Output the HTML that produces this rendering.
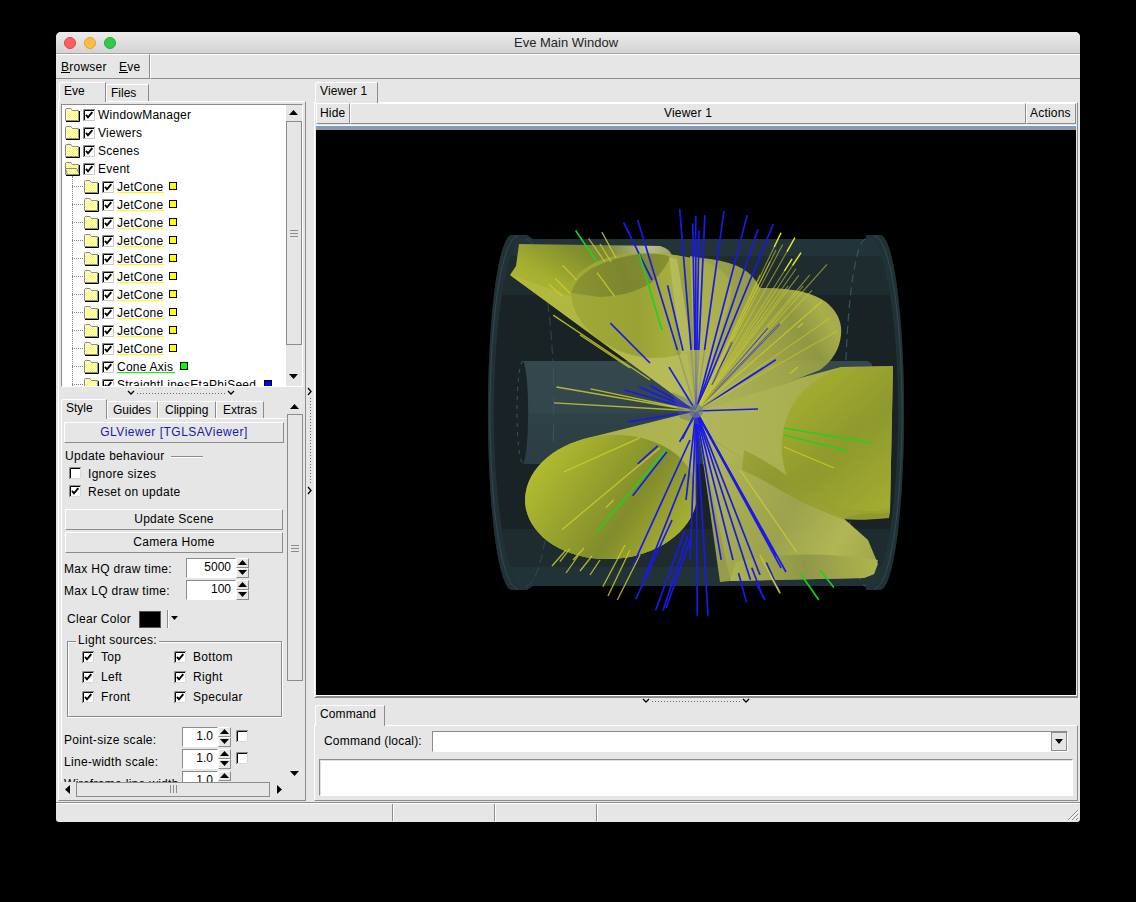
<!DOCTYPE html>
<html><head><meta charset="utf-8">
<style>
*{box-sizing:border-box;margin:0;padding:0}
html,body{width:1136px;height:902px;overflow:hidden;background:#000}
body{position:relative;font-family:"Liberation Sans",sans-serif;font-size:12px;color:#000}
.a{position:absolute}
.t{position:absolute;white-space:nowrap;line-height:14px}
.rz{border-top:1px solid #fff;border-left:1px solid #fff;border-right:1px solid #8c8c8c;border-bottom:1px solid #8c8c8c}
.sk{border-top:1px solid #8c8c8c;border-left:1px solid #8c8c8c;border-right:1px solid #fff;border-bottom:1px solid #fff}
.dot{position:absolute;width:12px;height:12px;border-radius:50%}
</style></head><body>
<!-- window -->
<div class="a" style="left:56px;top:32px;width:1024px;height:790px;background:#e6e6e6;border-radius:5px 5px 3px 3px"></div>
<!-- titlebar -->
<div class="a" style="left:56px;top:32px;width:1024px;height:22px;background:linear-gradient(#ececec,#d3d3d3);border-bottom:1px solid #a6a6a6;border-radius:5px 5px 0 0"></div>
<div class="dot" style="left:64px;top:37px;background:#fc605c;border:1px solid #e0443e"></div>
<div class="dot" style="left:84px;top:37px;background:#fdbc40;border:1px solid #dea236"></div>
<div class="dot" style="left:104px;top:37px;background:#34c84a;border:1px solid #27aa35"></div>
<div class="t" style="left:514px;top:36px;font-size:13px;color:#262626">Eve Main Window</div>
<!-- menubar -->
<div class="a rz" style="left:56px;top:54px;width:94px;height:25px;border-left:none"></div>
<div class="a rz" style="left:150px;top:54px;width:930px;height:25px;border-right:none"></div>
<div class="t" style="left:61px;top:60px;letter-spacing:0.25px">Browser</div>
<div class="a" style="left:61px;top:72px;width:9px;height:1px;background:#000"></div>
<div class="t" style="left:119px;top:60px;letter-spacing:0.25px">Eve</div>
<div class="a" style="left:119px;top:72px;width:9px;height:1px;background:#000"></div>

<!-- SVG defs -->
<svg width="0" height="0" style="position:absolute">
<defs>
<pattern id="chk" width="2" height="2" patternUnits="userSpaceOnUse"><rect width="2" height="2" fill="#ffff30"/><rect width="1" height="1" fill="#fff"/><rect x="1" y="1" width="1" height="1" fill="#fff"/></pattern>
<g id="fc"><path d="M0.5 12.5V1.8Q0.5 0.5 1.8 0.5H6L7.3 2.5H13.5V12.5Z" fill="url(#chk)" stroke="#8c8c8c"/><path d="M1.5 11.5V2.5H6.5" fill="none" stroke="#fff" stroke-opacity="0.7"/><path d="M1 13.5H14.5V3" fill="none" stroke="#000"/></g>
<g id="fo"><path d="M0.5 12.5V1.8Q0.5 0.5 1.8 0.5H6L7.3 2.5H13.5V12.5Z" fill="url(#chk)" stroke="#8c8c8c"/><path d="M0.5 6.5H11.5L14.5 12.5H2.5Z" fill="url(#chk)" stroke="#8c8c8c"/><path d="M1 13.5H14.5V3" fill="none" stroke="#000"/></g>
<g id="cb"><rect x="0" y="0" width="12" height="12" fill="#fff"/><path d="M0.5 12V0.5H12" fill="none" stroke="#8c8c8c"/><path d="M1.5 11V1.5H11" fill="none" stroke="#000"/><path d="M11.5 1V11.5H1" fill="none" stroke="#c8c8c8"/><path d="M3 5.8L5 8.3L9.3 3.2" fill="none" stroke="#000" stroke-width="1.9"/></g>
<g id="cbs"><rect x="0" y="0" width="12" height="12" fill="#fff"/><path d="M0.5 12V0.5H12" fill="none" stroke="#8c8c8c"/><path d="M1.5 11V1.5H11" fill="none" stroke="#000"/><path d="M11.5 1V11.5H1" fill="none" stroke="#d8d8d8"/><path d="M3 5.8L5 8.3L9.3 3.2" fill="none" stroke="#000" stroke-width="1.9"/></g>
<g id="cbe"><rect x="0" y="0" width="12" height="12" fill="#fff"/><path d="M0.5 12V0.5H12" fill="none" stroke="#8c8c8c"/><path d="M1.5 11V1.5H11" fill="none" stroke="#000"/><path d="M11.5 1V11.5H1" fill="none" stroke="#d8d8d8"/></g>
<g id="up"><path d="M0 5H9L4.5 0Z" fill="#000"/></g>
<g id="dn"><path d="M0 0H9L4.5 5Z" fill="#000"/></g>
</defs></svg>

<!-- left tabs -->
<div class="a" style="left:58px;top:101px;width:248px;height:700px;border-top:1px solid #fff;border-left:1px solid #fff;border-right:1px solid #8c8c8c;border-bottom:1px solid #8c8c8c"></div>
<div class="a" style="left:59px;top:82px;width:47px;height:20px;background:#e6e6e6;border-top:1px solid #fff;border-left:1px solid #fff;border-right:1px solid #8c8c8c;border-radius:3px 0 0 0"></div>
<div class="a" style="left:106px;top:84px;width:43px;height:17px;background:#e6e6e6;border-top:1px solid #fff;border-left:1px solid #fff;border-right:1px solid #8c8c8c"></div>
<div class="t" style="left:64px;top:84px">Eve</div>
<div class="t" style="left:111px;top:86px">Files</div>

<!-- list tree box -->
<div class="a" style="left:61px;top:104px;width:242px;height:283px;background:#fff;border-top:1px solid #8c8c8c;border-left:1px solid #8c8c8c;border-right:1px solid #fff;border-bottom:1px solid #fff;overflow:hidden">
<div class="a" style="left:-62px;top:-105px;width:400px;height:400px">
<svg class="a" style="left:65px;top:108px" width="16" height="14"><use href="#fc"/></svg>
<svg class="a" style="left:83px;top:109px" width="12" height="12"><use href="#cb"/></svg>
<div class="t" style="left:98px;top:108px;letter-spacing:0.25px">WindowManager</div>
<svg class="a" style="left:65px;top:126px" width="16" height="14"><use href="#fc"/></svg>
<svg class="a" style="left:83px;top:127px" width="12" height="12"><use href="#cb"/></svg>
<div class="t" style="left:98px;top:126px;letter-spacing:0.25px">Viewers</div>
<svg class="a" style="left:65px;top:144px" width="16" height="14"><use href="#fc"/></svg>
<svg class="a" style="left:83px;top:145px" width="12" height="12"><use href="#cb"/></svg>
<div class="t" style="left:98px;top:144px;letter-spacing:0.25px">Scenes</div>
<svg class="a" style="left:65px;top:162px" width="16" height="14"><use href="#fo"/></svg>
<svg class="a" style="left:83px;top:163px" width="12" height="12"><use href="#cb"/></svg>
<div class="t" style="left:98px;top:162px;letter-spacing:0.25px">Event</div>
<svg class="a" style="left:84px;top:180px" width="16" height="14"><use href="#fc"/></svg>
<svg class="a" style="left:102px;top:181px" width="12" height="12"><use href="#cb"/></svg>
<div class="t" style="left:117px;top:180px;letter-spacing:0.25px">JetCone</div>
<div class="a" style="left:72px;top:186px;width:11px;height:1px;border-top:1px dotted #808080"></div>
<div class="a" style="left:117px;top:192px;width:47px;height:1px;background:#ffff00"></div>
<div class="a" style="left:169px;top:182px;width:8px;height:8px;background:#ffff00;border:1px solid #000"></div>
<svg class="a" style="left:84px;top:198px" width="16" height="14"><use href="#fc"/></svg>
<svg class="a" style="left:102px;top:199px" width="12" height="12"><use href="#cb"/></svg>
<div class="t" style="left:117px;top:198px;letter-spacing:0.25px">JetCone</div>
<div class="a" style="left:72px;top:204px;width:11px;height:1px;border-top:1px dotted #808080"></div>
<div class="a" style="left:117px;top:210px;width:47px;height:1px;background:#ffff00"></div>
<div class="a" style="left:169px;top:200px;width:8px;height:8px;background:#ffff00;border:1px solid #000"></div>
<svg class="a" style="left:84px;top:216px" width="16" height="14"><use href="#fc"/></svg>
<svg class="a" style="left:102px;top:217px" width="12" height="12"><use href="#cb"/></svg>
<div class="t" style="left:117px;top:216px;letter-spacing:0.25px">JetCone</div>
<div class="a" style="left:72px;top:222px;width:11px;height:1px;border-top:1px dotted #808080"></div>
<div class="a" style="left:117px;top:228px;width:47px;height:1px;background:#ffff00"></div>
<div class="a" style="left:169px;top:218px;width:8px;height:8px;background:#ffff00;border:1px solid #000"></div>
<svg class="a" style="left:84px;top:234px" width="16" height="14"><use href="#fc"/></svg>
<svg class="a" style="left:102px;top:235px" width="12" height="12"><use href="#cb"/></svg>
<div class="t" style="left:117px;top:234px;letter-spacing:0.25px">JetCone</div>
<div class="a" style="left:72px;top:240px;width:11px;height:1px;border-top:1px dotted #808080"></div>
<div class="a" style="left:117px;top:246px;width:47px;height:1px;background:#ffff00"></div>
<div class="a" style="left:169px;top:236px;width:8px;height:8px;background:#ffff00;border:1px solid #000"></div>
<svg class="a" style="left:84px;top:252px" width="16" height="14"><use href="#fc"/></svg>
<svg class="a" style="left:102px;top:253px" width="12" height="12"><use href="#cb"/></svg>
<div class="t" style="left:117px;top:252px;letter-spacing:0.25px">JetCone</div>
<div class="a" style="left:72px;top:258px;width:11px;height:1px;border-top:1px dotted #808080"></div>
<div class="a" style="left:117px;top:264px;width:47px;height:1px;background:#ffff00"></div>
<div class="a" style="left:169px;top:254px;width:8px;height:8px;background:#ffff00;border:1px solid #000"></div>
<svg class="a" style="left:84px;top:270px" width="16" height="14"><use href="#fc"/></svg>
<svg class="a" style="left:102px;top:271px" width="12" height="12"><use href="#cb"/></svg>
<div class="t" style="left:117px;top:270px;letter-spacing:0.25px">JetCone</div>
<div class="a" style="left:72px;top:276px;width:11px;height:1px;border-top:1px dotted #808080"></div>
<div class="a" style="left:117px;top:282px;width:47px;height:1px;background:#ffff00"></div>
<div class="a" style="left:169px;top:272px;width:8px;height:8px;background:#ffff00;border:1px solid #000"></div>
<svg class="a" style="left:84px;top:288px" width="16" height="14"><use href="#fc"/></svg>
<svg class="a" style="left:102px;top:289px" width="12" height="12"><use href="#cb"/></svg>
<div class="t" style="left:117px;top:288px;letter-spacing:0.25px">JetCone</div>
<div class="a" style="left:72px;top:294px;width:11px;height:1px;border-top:1px dotted #808080"></div>
<div class="a" style="left:117px;top:300px;width:47px;height:1px;background:#ffff00"></div>
<div class="a" style="left:169px;top:290px;width:8px;height:8px;background:#ffff00;border:1px solid #000"></div>
<svg class="a" style="left:84px;top:306px" width="16" height="14"><use href="#fc"/></svg>
<svg class="a" style="left:102px;top:307px" width="12" height="12"><use href="#cb"/></svg>
<div class="t" style="left:117px;top:306px;letter-spacing:0.25px">JetCone</div>
<div class="a" style="left:72px;top:312px;width:11px;height:1px;border-top:1px dotted #808080"></div>
<div class="a" style="left:117px;top:318px;width:47px;height:1px;background:#ffff00"></div>
<div class="a" style="left:169px;top:308px;width:8px;height:8px;background:#ffff00;border:1px solid #000"></div>
<svg class="a" style="left:84px;top:324px" width="16" height="14"><use href="#fc"/></svg>
<svg class="a" style="left:102px;top:325px" width="12" height="12"><use href="#cb"/></svg>
<div class="t" style="left:117px;top:324px;letter-spacing:0.25px">JetCone</div>
<div class="a" style="left:72px;top:330px;width:11px;height:1px;border-top:1px dotted #808080"></div>
<div class="a" style="left:117px;top:336px;width:47px;height:1px;background:#ffff00"></div>
<div class="a" style="left:169px;top:326px;width:8px;height:8px;background:#ffff00;border:1px solid #000"></div>
<svg class="a" style="left:84px;top:342px" width="16" height="14"><use href="#fc"/></svg>
<svg class="a" style="left:102px;top:343px" width="12" height="12"><use href="#cb"/></svg>
<div class="t" style="left:117px;top:342px;letter-spacing:0.25px">JetCone</div>
<div class="a" style="left:72px;top:348px;width:11px;height:1px;border-top:1px dotted #808080"></div>
<div class="a" style="left:117px;top:354px;width:47px;height:1px;background:#ffff00"></div>
<div class="a" style="left:169px;top:344px;width:8px;height:8px;background:#ffff00;border:1px solid #000"></div>
<svg class="a" style="left:84px;top:360px" width="16" height="14"><use href="#fc"/></svg>
<svg class="a" style="left:102px;top:361px" width="12" height="12"><use href="#cb"/></svg>
<div class="t" style="left:117px;top:360px;letter-spacing:0.25px">Cone Axis</div>
<div class="a" style="left:72px;top:366px;width:11px;height:1px;border-top:1px dotted #808080"></div>
<div class="a" style="left:117px;top:372px;width:58px;height:1px;background:#00ff00"></div>
<div class="a" style="left:180px;top:362px;width:8px;height:8px;background:#00ff00;border:1px solid #000"></div>
<svg class="a" style="left:84px;top:378px" width="16" height="14"><use href="#fc"/></svg>
<svg class="a" style="left:102px;top:379px" width="12" height="12"><use href="#cb"/></svg>
<div class="t" style="left:117px;top:378px;letter-spacing:0.25px">StraightLinesEtaPhiSeed</div>
<div class="a" style="left:72px;top:384px;width:11px;height:1px;border-top:1px dotted #808080"></div>
<div class="a" style="left:117px;top:390px;width:142px;height:1px;background:#0000ff"></div>
<div class="a" style="left:264px;top:380px;width:8px;height:8px;background:#0000ff;border:1px solid #000"></div>
<div class="a" style="left:72px;top:176px;width:1px;height:210px;border-left:1px dotted #808080"></div>
</div>
</div>
<!-- tree scrollbar -->
<div class="a" style="left:286px;top:105px;width:16px;height:281px;background:#e6e6e6"></div>
<svg class="a" style="left:289px;top:110px" width="9" height="5"><use href="#up"/></svg>
<div class="a" style="left:286px;top:121px;width:16px;height:224px;border:1px solid #8c8c8c;border-top-color:#8c8c8c"></div>
<div class="a" style="left:290px;top:230px;width:8px;height:1px;background:#8c8c8c"></div>
<div class="a" style="left:290px;top:233px;width:8px;height:1px;background:#8c8c8c"></div>
<div class="a" style="left:290px;top:236px;width:8px;height:1px;background:#8c8c8c"></div>
<svg class="a" style="left:289px;top:374px" width="9" height="5"><use href="#dn"/></svg>

<!-- horizontal splitter -->
<div class="a" style="left:127px;top:390px;width:110px;height:6px">
<svg width="110" height="6" style="position:absolute;left:0;top:0"><path d="M1 1L4 4L7 1" fill="none" stroke="#000" stroke-width="1.3"/><path d="M101 1L104 4L107 1" fill="none" stroke="#000" stroke-width="1.3"/><path d="M10 3.5H99" stroke="#666" stroke-width="1" stroke-dasharray="1 2"/></svg>
</div>
<!-- vertical splitter -->
<svg class="a" style="left:306px;top:386px" width="8" height="110"><path d="M2 2L5 5.5L2 9" fill="none" stroke="#000" stroke-width="1.3"/><path d="M2 101L5 104.5L2 108" fill="none" stroke="#000" stroke-width="1.3"/><path d="M4.5 12V98" stroke="#666" stroke-width="1" stroke-dasharray="1 2"/></svg>

<!-- editor tabs -->
<div class="a" style="left:61px;top:418px;width:226px;height:364px;border-top:1px solid #fff;border-left:1px solid #fff"></div>
<div class="a" style="left:61px;top:399px;width:46px;height:20px;background:#e6e6e6;border-top:1px solid #fff;border-left:1px solid #fff;border-right:1px solid #8c8c8c;border-radius:3px 0 0 0"></div>
<div class="a" style="left:107px;top:401px;width:51px;height:17px;border-top:1px solid #fff;border-left:1px solid #fff;border-right:1px solid #8c8c8c"></div>
<div class="a" style="left:158px;top:401px;width:58px;height:17px;border-top:1px solid #fff;border-left:1px solid #fff;border-right:1px solid #8c8c8c"></div>
<div class="a" style="left:216px;top:401px;width:48px;height:17px;border-top:1px solid #fff;border-left:1px solid #fff;border-right:1px solid #8c8c8c"></div>
<div class="a" style="left:264px;top:418px;width:23px;height:1px;background:#fff"></div>
<div class="t" style="left:66px;top:401px">Style</div>
<div class="t" style="left:113px;top:403px">Guides</div>
<div class="t" style="left:165px;top:403px">Clipping</div>
<div class="t" style="left:223px;top:403px">Extras</div>

<!-- editor contents -->
<div class="a" style="left:61px;top:419px;width:226px;height:363px;overflow:hidden">
<div class="a" style="left:-61px;top:-419px;width:400px;height:900px">
<div class="a rz" style="left:64px;top:422px;width:220px;height:21px"></div>
<div class="t" style="left:64px;top:425px;width:220px;text-align:center;color:#1a1aa6;letter-spacing:0.5px">GLViewer [TGLSAViewer]</div>
<div class="t" style="left:65px;top:449px;letter-spacing:0.3px">Update behaviour</div>
<div class="a" style="left:171px;top:456px;width:32px;height:2px;border-top:1px solid #8c8c8c;border-bottom:1px solid #fff"></div>
<svg class="a" style="left:69px;top:467px" width="12" height="12"><use href="#cbe"/></svg>
<div class="t" style="left:88px;top:467px;letter-spacing:0.3px">Ignore sizes</div>
<svg class="a" style="left:69px;top:485px" width="12" height="12"><use href="#cbs"/></svg>
<div class="t" style="left:88px;top:485px;letter-spacing:0.3px">Reset on update</div>
<div class="a rz" style="left:65px;top:509px;width:218px;height:21px"></div>
<div class="t" style="left:65px;top:512px;width:218px;text-align:center;letter-spacing:0.3px">Update Scene</div>
<div class="a rz" style="left:65px;top:532px;width:218px;height:21px"></div>
<div class="t" style="left:65px;top:535px;width:218px;text-align:center;letter-spacing:0.3px">Camera Home</div>

<div class="t" style="left:64px;top:562px;letter-spacing:0.3px">Max HQ draw time:</div>
<div class="a sk" style="left:186px;top:558px;width:50px;height:20px;background:#fff"></div>
<div class="t" style="left:186px;top:560px;width:45px;text-align:right">5000</div>
<div class="a rz" style="left:236px;top:558px;width:13px;height:10px"></div>
<div class="a rz" style="left:236px;top:568px;width:13px;height:10px"></div>
<svg class="a" style="left:238px;top:560px" width="9" height="5"><use href="#up"/></svg>
<svg class="a" style="left:238px;top:570px" width="9" height="5"><use href="#dn"/></svg>
<div class="t" style="left:64px;top:584px;letter-spacing:0.3px">Max LQ draw time:</div>
<div class="a sk" style="left:186px;top:580px;width:50px;height:20px;background:#fff"></div>
<div class="t" style="left:186px;top:582px;width:45px;text-align:right">100</div>
<div class="a rz" style="left:236px;top:580px;width:13px;height:10px"></div>
<div class="a rz" style="left:236px;top:590px;width:13px;height:10px"></div>
<svg class="a" style="left:238px;top:582px" width="9" height="5"><use href="#up"/></svg>
<svg class="a" style="left:238px;top:592px" width="9" height="5"><use href="#dn"/></svg>

<div class="t" style="left:67px;top:612px;letter-spacing:0.3px">Clear Color</div>
<div class="a" style="left:139px;top:611px;width:22px;height:17px;background:#000;border:1px solid #555"></div>
<div class="a" style="left:167px;top:610px;width:2px;height:18px;border-left:1px solid #8c8c8c;border-right:1px solid #fff"></div>
<svg class="a" style="left:171px;top:616px" width="7" height="4"><path d="M0 0H7L3.5 4Z" fill="#000"/></svg>

<div class="a" style="left:67px;top:641px;width:215px;height:76px;border:1px solid #8c8c8c;box-shadow:inset 1px 1px 0 #fff, 1px 1px 0 #fff"></div>
<div class="t" style="left:76px;top:633px;padding:0 2px;background:#e6e6e6;letter-spacing:0.3px">Light sources:</div>
<svg class="a" style="left:82px;top:651px" width="12" height="12"><use href="#cbs"/></svg>
<div class="t" style="left:101px;top:650px;letter-spacing:0.3px">Top</div>
<svg class="a" style="left:174px;top:651px" width="12" height="12"><use href="#cbs"/></svg>
<div class="t" style="left:193px;top:650px;letter-spacing:0.3px">Bottom</div>
<svg class="a" style="left:82px;top:671px" width="12" height="12"><use href="#cbs"/></svg>
<div class="t" style="left:101px;top:670px;letter-spacing:0.3px">Left</div>
<svg class="a" style="left:174px;top:671px" width="12" height="12"><use href="#cbs"/></svg>
<div class="t" style="left:193px;top:670px;letter-spacing:0.3px">Right</div>
<svg class="a" style="left:82px;top:691px" width="12" height="12"><use href="#cbs"/></svg>
<div class="t" style="left:101px;top:690px;letter-spacing:0.3px">Front</div>
<svg class="a" style="left:174px;top:691px" width="12" height="12"><use href="#cbs"/></svg>
<div class="t" style="left:193px;top:690px;letter-spacing:0.3px">Specular</div>

<div class="t" style="left:64px;top:733px;letter-spacing:0.3px">Point-size scale:</div>
<div class="a sk" style="left:182px;top:727px;width:36px;height:20px;background:#fff"></div>
<div class="t" style="left:182px;top:729px;width:31px;text-align:right">1.0</div>
<div class="a rz" style="left:218px;top:727px;width:13px;height:10px"></div>
<div class="a rz" style="left:218px;top:737px;width:13px;height:10px"></div>
<svg class="a" style="left:220px;top:729px" width="9" height="5"><use href="#up"/></svg>
<svg class="a" style="left:220px;top:739px" width="9" height="5"><use href="#dn"/></svg>
<svg class="a" style="left:236px;top:730px" width="12" height="12"><use href="#cbe"/></svg>
<div class="t" style="left:64px;top:755px;letter-spacing:0.3px">Line-width scale:</div>
<div class="a sk" style="left:182px;top:749px;width:36px;height:20px;background:#fff"></div>
<div class="t" style="left:182px;top:751px;width:31px;text-align:right">1.0</div>
<div class="a rz" style="left:218px;top:749px;width:13px;height:10px"></div>
<div class="a rz" style="left:218px;top:759px;width:13px;height:10px"></div>
<svg class="a" style="left:220px;top:751px" width="9" height="5"><use href="#up"/></svg>
<svg class="a" style="left:220px;top:761px" width="9" height="5"><use href="#dn"/></svg>
<svg class="a" style="left:236px;top:752px" width="12" height="12"><use href="#cbe"/></svg>
<div class="t" style="left:64px;top:777px;letter-spacing:0.3px">Wireframe line width</div>
<div class="a sk" style="left:182px;top:771px;width:36px;height:20px;background:#fff"></div>
<div class="t" style="left:182px;top:773px;width:31px;text-align:right">1.0</div>
<div class="a rz" style="left:218px;top:771px;width:13px;height:10px"></div>
<svg class="a" style="left:220px;top:773px" width="9" height="5"><use href="#up"/></svg>
</div>
</div>

<!-- editor v-scrollbar -->
<svg class="a" style="left:290px;top:404px" width="9" height="5"><use href="#up"/></svg>
<div class="a" style="left:287px;top:414px;width:16px;height:267px;border:1px solid #8c8c8c"></div>
<div class="a" style="left:291px;top:545px;width:8px;height:1px;background:#8c8c8c"></div>
<div class="a" style="left:291px;top:548px;width:8px;height:1px;background:#8c8c8c"></div>
<div class="a" style="left:291px;top:551px;width:8px;height:1px;background:#8c8c8c"></div>
<svg class="a" style="left:290px;top:771px" width="9" height="5"><use href="#dn"/></svg>
<!-- editor h-scrollbar -->
<svg class="a" style="left:65px;top:785px" width="5" height="9"><path d="M5 0V9L0 4.5Z" fill="#000"/></svg>
<div class="a" style="left:76px;top:782px;width:194px;height:15px;border:1px solid #8c8c8c"></div>
<div class="a" style="left:170px;top:785px;width:1px;height:8px;background:#8c8c8c"></div>
<div class="a" style="left:173px;top:785px;width:1px;height:8px;background:#8c8c8c"></div>
<div class="a" style="left:176px;top:785px;width:1px;height:8px;background:#8c8c8c"></div>
<svg class="a" style="left:277px;top:785px" width="5" height="9"><path d="M0 0V9L5 4.5Z" fill="#000"/></svg>

<!-- right: viewer tab -->
<div class="a" style="left:314px;top:102px;width:764px;height:596px;border-top:1px solid #fff;border-left:1px solid #fff;border-right:1px solid #8c8c8c;border-bottom:1px solid #8c8c8c"></div>
<div class="a" style="left:315px;top:82px;width:63px;height:21px;background:#e6e6e6;border-top:1px solid #fff;border-left:1px solid #fff;border-right:1px solid #8c8c8c;border-radius:3px 0 0 0"></div>
<div class="t" style="left:320px;top:84px;letter-spacing:0.1px">Viewer 1</div>
<!-- toolbar -->
<div class="a rz" style="left:316px;top:103px;width:34px;height:21px"></div>
<div class="t" style="left:320px;top:106px;letter-spacing:0.2px">Hide</div>
<div class="a rz" style="left:350px;top:103px;width:676px;height:21px"></div>
<div class="t" style="left:350px;top:106px;width:676px;text-align:center;letter-spacing:0.2px">Viewer 1</div>
<div class="a rz" style="left:1026px;top:103px;width:50px;height:21px"></div>
<div class="t" style="left:1030px;top:106px;letter-spacing:0.2px">Actions</div>
<div class="a" style="left:316px;top:125px;width:760px;height:1px;background:#fff"></div>
<div class="a" style="left:316px;top:126px;width:760px;height:3px;background:#7b9dc1"></div>
<div class="a" style="left:316px;top:129px;width:760px;height:1px;background:#9a9a9a"></div>
<!-- GL viewer -->
<div class="a" id="gl" style="left:316px;top:130px;width:760px;height:565px;background:#000;overflow:hidden">
<!--GL--><svg width="760" height="565" viewBox="316 130 760 565" style="position:absolute;left:0;top:0">
<defs><linearGradient id="band" x1="0" y1="239" x2="0" y2="586" gradientUnits="userSpaceOnUse">
<stop offset="0" stop-color="#223439"/><stop offset="0.05" stop-color="#223439"/>
<stop offset="0.05" stop-color="#1e2c30"/><stop offset="0.161" stop-color="#1e2c30"/>
<stop offset="0.161" stop-color="#192326"/><stop offset="0.836" stop-color="#192326"/>
<stop offset="0.836" stop-color="#1e2b2f"/><stop offset="0.945" stop-color="#1e2b2f"/>
<stop offset="0.945" stop-color="#223338"/><stop offset="1" stop-color="#223338"/>
</linearGradient><linearGradient id="pipe" x1="0" y1="361" x2="0" y2="464" gradientUnits="userSpaceOnUse"><stop offset="0" stop-color="#34484e"/><stop offset="0.5" stop-color="#33464c"/><stop offset="0.5" stop-color="#2f4247"/><stop offset="1" stop-color="#2c3e43"/></linearGradient><linearGradient id="gA" x1="560" y1="320" x2="610" y2="235" gradientUnits="userSpaceOnUse"><stop offset="0" stop-color="#b6bf3a"/><stop offset="0.3" stop-color="#acb630"/><stop offset="0.7" stop-color="#87922f"/><stop offset="1" stop-color="#7c8734"/></linearGradient><radialGradient id="gAhl" cx="650" cy="246" r="45" gradientUnits="userSpaceOnUse"><stop offset="0" stop-color="#c8c9a0" stop-opacity="0.85"/><stop offset="1" stop-color="#c8c9a0" stop-opacity="0"/></radialGradient><linearGradient id="gAlow" x1="520" y1="300" x2="690" y2="400" gradientUnits="userSpaceOnUse"><stop offset="0" stop-color="#b3bb3c"/><stop offset="0.5" stop-color="#adb548"/><stop offset="1" stop-color="#b9be5a"/></linearGradient><linearGradient id="gUout" x1="570" y1="330" x2="735" y2="330" gradientUnits="userSpaceOnUse"><stop offset="0" stop-color="#b6bf38"/><stop offset="0.25" stop-color="#b3b94c"/><stop offset="0.6" stop-color="#b7bc5a"/><stop offset="1" stop-color="#aeb54c"/></linearGradient><linearGradient id="gUin" x1="575" y1="300" x2="731" y2="300" gradientUnits="userSpaceOnUse"><stop offset="0" stop-color="#a0a936"/><stop offset="0.4" stop-color="#99a234"/><stop offset="0.62" stop-color="#a7ae40"/><stop offset="0.75" stop-color="#8f9a30"/><stop offset="1" stop-color="#a6af34"/></linearGradient><linearGradient id="gUsh" x1="575" y1="290" x2="671" y2="260" gradientUnits="userSpaceOnUse"><stop offset="0" stop-color="#8a9431"/><stop offset="0.5" stop-color="#7b862f"/><stop offset="1" stop-color="#86902f"/></linearGradient><linearGradient id="gU1in" x1="575" y1="290" x2="670" y2="260" gradientUnits="userSpaceOnUse"><stop offset="0" stop-color="#8c9731"/><stop offset="0.5" stop-color="#7c872f"/><stop offset="1" stop-color="#8a9431"/></linearGradient><linearGradient id="gU1out" x1="560" y1="330" x2="690" y2="330" gradientUnits="userSpaceOnUse"><stop offset="0" stop-color="#b5c030"/><stop offset="0.25" stop-color="#b0b845"/><stop offset="0.6" stop-color="#b7bc5a"/><stop offset="1" stop-color="#aab24a"/></linearGradient><linearGradient id="gU2" x1="671" y1="300" x2="735" y2="300" gradientUnits="userSpaceOnUse"><stop offset="0" stop-color="#b5b960"/><stop offset="0.12" stop-color="#a9b040"/><stop offset="0.35" stop-color="#909a30"/><stop offset="0.7" stop-color="#a3ac33"/><stop offset="1" stop-color="#aab334"/></linearGradient><linearGradient id="gR" x1="700" y1="400" x2="845" y2="300" gradientUnits="userSpaceOnUse"><stop offset="0" stop-color="#b8bd58"/><stop offset="0.45" stop-color="#a9ae4c"/><stop offset="0.7" stop-color="#9aa146"/><stop offset="0.85" stop-color="#b4ba4e"/><stop offset="1" stop-color="#aab148"/></linearGradient><linearGradient id="gRR" x1="785" y1="380" x2="890" y2="500" gradientUnits="userSpaceOnUse"><stop offset="0" stop-color="#a8b12e"/><stop offset="0.55" stop-color="#8e982c"/><stop offset="1" stop-color="#a2ac2e"/></linearGradient><linearGradient id="gRRpale" x1="700" y1="420" x2="840" y2="420" gradientUnits="userSpaceOnUse"><stop offset="0" stop-color="#b7bb5c"/><stop offset="0.5" stop-color="#b2b854"/><stop offset="1" stop-color="#a9b04a"/></linearGradient><linearGradient id="gRRband" x1="720" y1="430" x2="840" y2="515" gradientUnits="userSpaceOnUse"><stop offset="0" stop-color="#a2aa3a"/><stop offset="0.5" stop-color="#8d972e"/><stop offset="1" stop-color="#9aa330"/></linearGradient><linearGradient id="gRRout" x1="730" y1="420" x2="850" y2="520" gradientUnits="userSpaceOnUse"><stop offset="0" stop-color="#b6bc50"/><stop offset="0.5" stop-color="#9aa22c"/><stop offset="1" stop-color="#8f992c"/></linearGradient><linearGradient id="gLR" x1="720" y1="470" x2="880" y2="560" gradientUnits="userSpaceOnUse"><stop offset="0" stop-color="#b5ba55"/><stop offset="0.45" stop-color="#a3a94f"/><stop offset="0.75" stop-color="#b9be56"/><stop offset="1" stop-color="#a8ae4a"/></linearGradient><linearGradient id="gLRlip" x1="730" y1="575" x2="880" y2="560" gradientUnits="userSpaceOnUse"><stop offset="0" stop-color="#b0b64e"/><stop offset="0.5" stop-color="#8c9448"/><stop offset="1" stop-color="#b2b84c"/></linearGradient><linearGradient id="gLL" x1="540" y1="450" x2="700" y2="560" gradientUnits="userSpaceOnUse"><stop offset="0" stop-color="#b4bf30"/><stop offset="0.55" stop-color="#818c2c"/><stop offset="0.85" stop-color="#a9b130"/><stop offset="1" stop-color="#b8c036"/></linearGradient><linearGradient id="gLLout" x1="600" y1="430" x2="700" y2="480" gradientUnits="userSpaceOnUse"><stop offset="0" stop-color="#b0b654"/><stop offset="1" stop-color="#b8bd4c"/></linearGradient><linearGradient id="gM" x1="690" y1="430" x2="740" y2="560" gradientUnits="userSpaceOnUse"><stop offset="0" stop-color="#b4b958"/><stop offset="1" stop-color="#a2a84c"/></linearGradient></defs>
<path d="M512 235H527L533 239H866V235H880A24 177 0 0 1 880 590H866V586H533L527 590H512A24 177 0 0 1 512 235Z" fill="url(#band)"/>
<path d="M512 235H526A32 177 0 0 0 526 590H512A24 177 0 0 1 512 235Z" fill="#213236"/>
<path d="M866 235H880A24 177 0 0 1 880 590H866A32 177 0 0 0 866 235Z" fill="#213236"/>
<path d="M518 236A28 176 0 0 0 518 589" fill="none" stroke="#2e4a51" stroke-width="1"/>
<path d="M874 236A28 176 0 0 1 874 589" fill="none" stroke="#2e4a51" stroke-width="1"/>
<path d="M866 239A21 173 0 0 0 866 586" fill="none" stroke="#36555c" stroke-width="1.2" stroke-dasharray="8 5"/>
<path d="M526 239A28 173 0 0 1 526 586" fill="none" stroke="#2e4a51" stroke-width="1" stroke-dasharray="9 5"/>
<path d="M523 361H868L872 364V464H523A6 52 0 0 0 523 361Z" fill="url(#pipe)"/>
<path d="M523 361A6 51 0 0 0 523 463" fill="none" stroke="#3e555b" stroke-width="1" stroke-dasharray="4 5"/>
<path d="M553.5 368V456" stroke="#3a5157" stroke-width="1" stroke-dasharray="18 10"/>
<path d="M696.0 411.0 L775.0 387.0 L800.0 378.0 L841.0 367.0 L893.0 366.0 L890.0 508.0 L842.0 518.0 L706.0 436.0Z" fill="url(#gRRpale)" fill-opacity="0.95"/>
<path d="M841 368L893 366L890 513Q860 515 824 510Q800 500 790 485Q780 460 782 440Q785 405 810 385Q825 373 841 368Z" fill="url(#gRR)" fill-opacity="0.95"/>
<path d="M519 244L660 246Q671 249 672 257L696 411L510 275L516 266Z" fill="url(#gA)" fill-opacity="0.95"/>
<path d="M519 244L660 246Q671 249 672 257L696 411L510 275L516 266Z" fill="url(#gAhl)"/>
<path d="M510 275L571 296Q585 340 640 360L696 411Z" fill="url(#gAlow)" fill-opacity="0.9"/>
<path d="M571.0 292.0 L571.3 288.5 L572.1 285.1 L573.4 281.8 L575.1 278.7 L577.3 275.8 L580.0 273.0 L583.0 270.4 L586.3 267.9 L590.0 265.6 L594.0 263.5 L598.3 261.6 L602.8 259.8 L607.5 258.3 L612.4 256.9 L617.4 255.7 L622.6 254.8 L627.9 254.0 L633.2 253.4 L638.6 253.1 L644.0 253.0 L650.9 253.1 L657.6 253.4 L664.2 253.9 L670.7 254.5 L677.0 255.4 L683.1 256.4 L688.9 257.6 L694.5 259.0 L699.8 260.5 L704.8 262.2 L709.4 264.1 L713.6 266.2 L717.5 268.4 L720.9 270.7 L723.9 273.2 L726.4 275.9 L728.4 278.7 L729.8 281.7 L730.7 284.8 L731.0 288.0 L730.8 293.5 L730.1 298.9 L729.0 304.3 L727.4 309.5 L696.0 411.0 L601.1 341.0 L596.2 337.4 L591.8 333.5 L587.7 329.5 L584.0 325.2 L580.7 320.8 L577.8 316.2 L575.4 311.5 L573.5 306.7 L572.1 301.9 L571.3 296.9Z" fill="url(#gUout)" fill-opacity="0.95"/>
<path d="M571 292C571 268 608 253 644 253C690 253 731 266 731 288C731 325 700 358 656 358C610 358 571 325 571 292Z" fill="url(#gUin)"/>
<path d="M571 293Q580 262 640 254Q662 253 671 257Q660 276 651 283Q630 296 600 297Z" fill="url(#gUsh)"/>
<path d="M669 257L677 259L692 350L681 354Z" fill="#b9bd62" fill-opacity="0.85"/>
<path d="M690 256L702 258Q744 262 756 281L760 288Q805 287 826 302Q843 316 841 335Q839 356 820 370L774 388L696 411Z" fill="url(#gR)" fill-opacity="0.92"/>
<path d="M696 411L706 436L842 517L868 540L878 564L874 574L864 578L730 581Z" fill="url(#gLR)" fill-opacity="0.95"/>
<path d="M736 562Q800 548 878 560L874 574L864 578L730 581Z" fill="url(#gLRlip)" fill-opacity="0.9"/>
<path d="M744 450Q770 462 795 482Q820 502 850 510L890 512L889 518Q860 521 842 519Q805 505 780 490Q760 478 742 470Z" fill="url(#gRRband)" fill-opacity="0.92"/>
<path d="M696 411L706 420L730 581L720 582Z" fill="url(#gM)" fill-opacity="0.9"/>
<path d="M525.2 497.6 L525.8 492.2 L527.0 486.8 L528.9 481.5 L531.4 476.3 L534.5 471.3 L538.2 466.4 L542.5 461.8 L547.3 457.5 L552.5 453.5 L558.2 449.8 L564.4 446.4 L570.8 443.5 L577.6 440.9 L584.6 438.8 L696.0 411.0 L696.8 491.0 L696.8 496.4 L696.2 501.8 L695.0 507.2 L693.1 512.5 L690.6 517.7 L687.5 522.7 L683.8 527.6 L679.5 532.2 L674.7 536.5 L669.5 540.5 L663.8 544.2 L657.6 547.6 L651.2 550.5 L644.4 553.1 L637.4 555.2 L630.2 556.9 L622.8 558.1 L615.3 558.9 L607.8 559.1 L600.4 559.0 L593.0 558.3 L585.7 557.2 L578.7 555.6 L571.9 553.6 L565.3 551.1 L559.2 548.2 L553.4 545.0 L548.1 541.4 L543.2 537.4 L538.9 533.1 L535.1 528.6 L531.9 523.8 L529.2 518.8 L527.3 513.6 L525.9 508.4 L525.2 503.0Z" fill="url(#gLLout)" fill-opacity="0.95"/>
<path d="M696.8 491.0 L696.8 496.4 L696.2 501.8 L695.0 507.2 L693.1 512.5 L690.6 517.7 L687.5 522.7 L683.8 527.6 L679.5 532.2 L674.7 536.5 L669.5 540.5 L663.8 544.2 L657.6 547.6 L651.2 550.5 L644.4 553.1 L637.4 555.2 L630.2 556.9 L622.8 558.1 L615.3 558.8 L607.8 559.1 L600.4 559.0 L593.0 558.3 L585.7 557.2 L578.7 555.6 L571.9 553.6 L565.3 551.1 L559.2 548.2 L553.4 545.0 L548.1 541.4 L543.2 537.4 L538.9 533.1 L535.1 528.6 L531.9 523.8 L529.3 518.8 L527.3 513.6 L525.9 508.4 L525.2 503.0 L525.2 497.6 L525.8 492.2 L527.0 486.8 L528.9 481.5 L531.4 476.3 L534.5 471.3 L538.2 466.4 L542.5 461.8 L547.3 457.5 L552.5 453.5 L558.2 449.8 L564.4 446.4 L570.8 443.5 L577.6 440.9 L584.6 438.8 L591.8 437.1 L599.2 435.9 L606.7 435.2 L614.2 434.9 L621.6 435.0 L629.0 435.7 L636.3 436.8 L643.3 438.4 L650.1 440.4 L656.7 442.9 L662.8 445.8 L668.6 449.0 L673.9 452.6 L678.8 456.6 L683.1 460.9 L686.9 465.4 L690.1 470.2 L692.7 475.2 L694.7 480.4 L696.1 485.6 L696.8 491.0Z" fill="url(#gLL)"/>
<line x1="637.7" y1="220.0" x2="677.4" y2="350.0" stroke="#1a1ae8" stroke-width="1.7" stroke-opacity="1"/>
<line x1="677.4" y1="350.0" x2="696.0" y2="411.0" stroke="#1a1ae8" stroke-width="1.4" stroke-opacity="0.18"/>
<line x1="679.7" y1="209.2" x2="691.1" y2="350.0" stroke="#1a1ae8" stroke-width="1.7" stroke-opacity="1"/>
<line x1="691.1" y1="350.0" x2="696.0" y2="411.0" stroke="#1a1ae8" stroke-width="1.4" stroke-opacity="0.18"/>
<line x1="692.7" y1="223.6" x2="694.9" y2="350.0" stroke="#1a1ae8" stroke-width="1.7" stroke-opacity="1"/>
<line x1="694.9" y1="350.0" x2="696.0" y2="411.0" stroke="#1a1ae8" stroke-width="1.4" stroke-opacity="0.18"/>
<line x1="695.7" y1="216.0" x2="695.9" y2="350.0" stroke="#1a1ae8" stroke-width="1.7" stroke-opacity="1"/>
<line x1="695.9" y1="350.0" x2="696.0" y2="411.0" stroke="#1a1ae8" stroke-width="1.4" stroke-opacity="0.18"/>
<line x1="698.9" y1="230.5" x2="697.0" y2="350.0" stroke="#1a1ae8" stroke-width="1.7" stroke-opacity="1"/>
<line x1="697.0" y1="350.0" x2="696.0" y2="411.0" stroke="#1a1ae8" stroke-width="1.4" stroke-opacity="0.18"/>
<line x1="704.9" y1="215.1" x2="698.8" y2="350.0" stroke="#1a1ae8" stroke-width="1.7" stroke-opacity="1"/>
<line x1="698.8" y1="350.0" x2="696.0" y2="411.0" stroke="#1a1ae8" stroke-width="1.4" stroke-opacity="0.18"/>
<line x1="724.0" y1="211.0" x2="704.5" y2="350.0" stroke="#1a1ae8" stroke-width="1.7" stroke-opacity="1"/>
<line x1="704.5" y1="350.0" x2="696.0" y2="411.0" stroke="#1a1ae8" stroke-width="1.4" stroke-opacity="0.18"/>
<line x1="696.0" y1="411.0" x2="747.2" y2="215.1" stroke="#1a1ae8" stroke-width="1.7" stroke-opacity="1"/>
<line x1="696.0" y1="411.0" x2="758.0" y2="229.3" stroke="#1a1ae8" stroke-width="1.7" stroke-opacity="1"/>
<line x1="696.0" y1="411.0" x2="773.3" y2="224.0" stroke="#1a1ae8" stroke-width="1.7" stroke-opacity="1"/>
<line x1="696.0" y1="411.0" x2="697.3" y2="615.8" stroke="#1a1ae8" stroke-width="1.7" stroke-opacity="1"/>
<line x1="696.0" y1="411.0" x2="708.0" y2="615.8" stroke="#1a1ae8" stroke-width="1.7" stroke-opacity="1"/>
<line x1="696.0" y1="411.0" x2="721.2" y2="559.8" stroke="#1a1ae8" stroke-width="1.7" stroke-opacity="1"/>
<line x1="696.0" y1="411.0" x2="781.0" y2="567.8" stroke="#1a1ae8" stroke-width="1.7" stroke-opacity="1"/>
<line x1="696.0" y1="411.0" x2="773.0" y2="549.9" stroke="#1a1ae8" stroke-width="1.7" stroke-opacity="1"/>
<line x1="696.0" y1="411.0" x2="750.5" y2="579.8" stroke="#1a1ae8" stroke-width="1.7" stroke-opacity="1"/>
<line x1="696.0" y1="411.0" x2="623.8" y2="389.8" stroke="#1a1ae8" stroke-width="1.7" stroke-opacity="1"/>
<line x1="696.0" y1="411.0" x2="638.9" y2="387.0" stroke="#1a1ae8" stroke-width="1.7" stroke-opacity="1"/>
<line x1="696.0" y1="411.0" x2="650.0" y2="385.4" stroke="#1a1ae8" stroke-width="1.7" stroke-opacity="1"/>
<line x1="696.0" y1="411.0" x2="627.8" y2="421.8" stroke="#1a1ae8" stroke-width="1.7" stroke-opacity="1"/>
<line x1="696.0" y1="411.0" x2="669.0" y2="367.1" stroke="#1a1ae8" stroke-width="1.7" stroke-opacity="1"/>
<line x1="696.0" y1="411.0" x2="682.4" y2="439.0" stroke="#1a1ae8" stroke-width="1.7" stroke-opacity="1"/>
<line x1="696.0" y1="411.0" x2="758.0" y2="409.0" stroke="#1a1ae8" stroke-width="1.7" stroke-opacity="1"/>
<line x1="696.0" y1="411.0" x2="779.8" y2="323.8" stroke="#1a1ae8" stroke-width="1.7" stroke-opacity="1"/>
<line x1="696.0" y1="411.0" x2="767.8" y2="327.8" stroke="#1a1ae8" stroke-width="1.7" stroke-opacity="1"/>
<line x1="696.0" y1="411.0" x2="775.8" y2="359.8" stroke="#1a1ae8" stroke-width="1.7" stroke-opacity="1"/>
<line x1="696.0" y1="411.0" x2="690.0" y2="560.0" stroke="#1a1ae8" stroke-width="1.7" stroke-opacity="1"/>
<line x1="696.0" y1="411.0" x2="686.0" y2="500.0" stroke="#1a1ae8" stroke-width="1.7" stroke-opacity="1"/>
<line x1="696.0" y1="411.0" x2="776.0" y2="556.0" stroke="#1a1ae8" stroke-width="1.7" stroke-opacity="1"/>
<line x1="696.0" y1="411.0" x2="786.0" y2="572.0" stroke="#1a1ae8" stroke-width="1.7" stroke-opacity="1"/>
<line x1="696.0" y1="411.0" x2="760.0" y2="575.0" stroke="#1a1ae8" stroke-width="1.7" stroke-opacity="1"/>
<line x1="696.0" y1="411.0" x2="733.0" y2="560.0" stroke="#1a1ae8" stroke-width="1.7" stroke-opacity="1"/>
<line x1="623.6" y1="222.5" x2="652.0" y2="280.0" stroke="#1a1ae8" stroke-width="1.7" stroke-opacity="1"/>
<line x1="610.4" y1="323.1" x2="650.0" y2="363.0" stroke="#1a1ae8" stroke-width="1.7" stroke-opacity="1"/>
<line x1="667.6" y1="285.4" x2="683.0" y2="350.8" stroke="#1a1ae8" stroke-width="1.7" stroke-opacity="1"/>
<line x1="731.9" y1="341.8" x2="712.0" y2="385.0" stroke="#1a1ae8" stroke-width="1.7" stroke-opacity="1"/>
<line x1="637.7" y1="463.9" x2="657.7" y2="445.9" stroke="#1a1ae8" stroke-width="1.7" stroke-opacity="1"/>
<line x1="632.7" y1="495.8" x2="666.7" y2="451.9" stroke="#1a1ae8" stroke-width="1.7" stroke-opacity="1"/>
<line x1="632.7" y1="565.7" x2="690.0" y2="440.0" stroke="#1a1ae8" stroke-width="1.7" stroke-opacity="1"/>
<line x1="679.6" y1="441.9" x2="694.6" y2="416.0" stroke="#1a1ae8" stroke-width="1.7" stroke-opacity="1"/>
<line x1="643.7" y1="579.6" x2="685.6" y2="473.9" stroke="#1a1ae8" stroke-width="1.7" stroke-opacity="1"/>
<line x1="635.8" y1="599.2" x2="672.0" y2="520.0" stroke="#1a1ae8" stroke-width="1.7" stroke-opacity="1"/>
<line x1="655.6" y1="610.5" x2="685.0" y2="530.0" stroke="#1a1ae8" stroke-width="1.7" stroke-opacity="1"/>
<line x1="663.0" y1="610.5" x2="688.0" y2="535.0" stroke="#1a1ae8" stroke-width="1.7" stroke-opacity="1"/>
<line x1="666.2" y1="607.9" x2="690.0" y2="540.0" stroke="#1a1ae8" stroke-width="1.7" stroke-opacity="1"/>
<line x1="738.5" y1="573.0" x2="746.5" y2="602.4" stroke="#1a1ae8" stroke-width="1.7" stroke-opacity="1"/>
<line x1="751.8" y1="567.8" x2="763.8" y2="599.0" stroke="#1a1ae8" stroke-width="1.7" stroke-opacity="1"/>
<line x1="766.4" y1="562.5" x2="779.7" y2="591.8" stroke="#1a1ae8" stroke-width="1.7" stroke-opacity="1"/>
<line x1="756.0" y1="583.0" x2="765.0" y2="600.0" stroke="#1a1ae8" stroke-width="1.7" stroke-opacity="1"/>
<line x1="696.0" y1="411.0" x2="781.0" y2="232.7" stroke="#cccc2a" stroke-width="1.1" stroke-opacity="0.6"/>
<line x1="781.0" y1="232.7" x2="774.2" y2="247.0" stroke="#f0f020" stroke-width="1.4" stroke-opacity="0.9"/>
<line x1="696.0" y1="411.0" x2="794.9" y2="237.7" stroke="#cccc2a" stroke-width="1.1" stroke-opacity="0.6"/>
<line x1="794.9" y1="237.7" x2="787.0" y2="251.6" stroke="#f0f020" stroke-width="1.4" stroke-opacity="0.9"/>
<line x1="696.0" y1="411.0" x2="782.7" y2="244.4" stroke="#cccc2a" stroke-width="1.1" stroke-opacity="0.6"/>
<line x1="696.0" y1="411.0" x2="801.0" y2="252.7" stroke="#cccc2a" stroke-width="1.1" stroke-opacity="0.6"/>
<line x1="801.0" y1="252.7" x2="792.6" y2="265.4" stroke="#f0f020" stroke-width="1.4" stroke-opacity="0.9"/>
<line x1="696.0" y1="411.0" x2="792.1" y2="258.8" stroke="#cccc2a" stroke-width="1.1" stroke-opacity="0.6"/>
<line x1="792.1" y1="258.8" x2="784.4" y2="271.0" stroke="#f0f020" stroke-width="1.4" stroke-opacity="0.9"/>
<line x1="696.0" y1="411.0" x2="796.0" y2="268.8" stroke="#cccc2a" stroke-width="1.1" stroke-opacity="0.6"/>
<line x1="696.0" y1="411.0" x2="798.8" y2="275.4" stroke="#cccc2a" stroke-width="1.1" stroke-opacity="0.6"/>
<line x1="696.0" y1="411.0" x2="809.8" y2="274.9" stroke="#cccc2a" stroke-width="1.1" stroke-opacity="0.6"/>
<line x1="696.0" y1="411.0" x2="827.0" y2="264.3" stroke="#cccc2a" stroke-width="1.1" stroke-opacity="0.6"/>
<line x1="696.0" y1="411.0" x2="803.2" y2="286.0" stroke="#cccc2a" stroke-width="1.1" stroke-opacity="0.6"/>
<line x1="696.0" y1="411.0" x2="812.0" y2="290.4" stroke="#cccc2a" stroke-width="1.1" stroke-opacity="0.6"/>
<line x1="696.0" y1="411.0" x2="822.0" y2="301.0" stroke="#cccc2a" stroke-width="1.1" stroke-opacity="0.6"/>
<line x1="696.0" y1="411.0" x2="837.7" y2="330.8" stroke="#cccc2a" stroke-width="1.1" stroke-opacity="0.6"/>
<line x1="696.0" y1="411.0" x2="821.7" y2="301.9" stroke="#cccc2a" stroke-width="1.1" stroke-opacity="0.6"/>
<line x1="696.0" y1="411.0" x2="770.0" y2="262.0" stroke="#cccc2a" stroke-width="1.1" stroke-opacity="0.6"/>
<line x1="696.0" y1="411.0" x2="760.0" y2="275.0" stroke="#cccc2a" stroke-width="1.1" stroke-opacity="0.6"/>
<line x1="696.0" y1="411.0" x2="776.0" y2="250.0" stroke="#cccc2a" stroke-width="1.1" stroke-opacity="0.6"/>
<line x1="696.0" y1="411.0" x2="788.0" y2="286.0" stroke="#cccc2a" stroke-width="1.1" stroke-opacity="0.6"/>
<line x1="696.0" y1="411.0" x2="830.0" y2="318.0" stroke="#cccc2a" stroke-width="1.1" stroke-opacity="0.6"/>
<line x1="588.6" y1="238.5" x2="605.0" y2="262.0" stroke="#cccc2a" stroke-width="1.3" stroke-opacity="0.85"/>
<line x1="601.9" y1="232.1" x2="616.0" y2="258.0" stroke="#cccc2a" stroke-width="1.3" stroke-opacity="0.85"/>
<line x1="600.0" y1="244.0" x2="611.0" y2="262.0" stroke="#cccc2a" stroke-width="1.3" stroke-opacity="0.85"/>
<line x1="597.0" y1="272.6" x2="614.6" y2="296.3" stroke="#cccc2a" stroke-width="1.3" stroke-opacity="0.85"/>
<line x1="562.5" y1="265.2" x2="576.5" y2="279.9" stroke="#cccc2a" stroke-width="1.3" stroke-opacity="0.85"/>
<line x1="555.2" y1="278.5" x2="570.5" y2="293.8" stroke="#cccc2a" stroke-width="1.3" stroke-opacity="0.85"/>
<line x1="549.2" y1="284.5" x2="562.5" y2="296.5" stroke="#cccc2a" stroke-width="1.3" stroke-opacity="0.85"/>
<line x1="553.2" y1="315.1" x2="650.0" y2="380.0" stroke="#cccc2a" stroke-width="1.3" stroke-opacity="0.85"/>
<line x1="580.0" y1="335.0" x2="630.0" y2="368.0" stroke="#cccc2a" stroke-width="1.3" stroke-opacity="0.85"/>
<line x1="556.5" y1="387.0" x2="696.0" y2="411.0" stroke="#cccc2a" stroke-width="1.3" stroke-opacity="0.85"/>
<line x1="554.0" y1="402.8" x2="696.0" y2="411.0" stroke="#cccc2a" stroke-width="1.3" stroke-opacity="0.85"/>
<line x1="590.5" y1="388.8" x2="696.0" y2="411.0" stroke="#cccc2a" stroke-width="1.3" stroke-opacity="0.85"/>
<line x1="561.9" y1="529.7" x2="659.7" y2="447.9" stroke="#cccc2a" stroke-width="1.3" stroke-opacity="0.85"/>
<line x1="605.8" y1="507.8" x2="613.8" y2="499.8" stroke="#cccc2a" stroke-width="1.3" stroke-opacity="0.85"/>
<line x1="563.9" y1="471.9" x2="639.7" y2="437.9" stroke="#cccc2a" stroke-width="1.3" stroke-opacity="0.85"/>
<line x1="602.8" y1="586.8" x2="625.0" y2="545.0" stroke="#cccc2a" stroke-width="1.3" stroke-opacity="0.85"/>
<line x1="608.0" y1="596.0" x2="630.0" y2="550.0" stroke="#cccc2a" stroke-width="1.3" stroke-opacity="0.85"/>
<line x1="617.3" y1="600.0" x2="640.0" y2="555.0" stroke="#cccc2a" stroke-width="1.3" stroke-opacity="0.85"/>
<line x1="559.9" y1="561.7" x2="569.9" y2="548.7" stroke="#cccc2a" stroke-width="1.3" stroke-opacity="0.85"/>
<line x1="552.0" y1="566.0" x2="566.0" y2="550.0" stroke="#cccc2a" stroke-width="1.3" stroke-opacity="0.85"/>
<line x1="573.0" y1="560.0" x2="584.0" y2="548.0" stroke="#cccc2a" stroke-width="1.3" stroke-opacity="0.85"/>
<line x1="580.0" y1="571.0" x2="592.0" y2="556.0" stroke="#cccc2a" stroke-width="1.3" stroke-opacity="0.85"/>
<line x1="590.0" y1="575.0" x2="600.0" y2="560.0" stroke="#cccc2a" stroke-width="1.3" stroke-opacity="0.85"/>
<line x1="566.0" y1="573.0" x2="578.0" y2="556.0" stroke="#cccc2a" stroke-width="1.3" stroke-opacity="0.85"/>
<line x1="797.0" y1="552.5" x2="740.0" y2="470.0" stroke="#cccc2a" stroke-width="1.3" stroke-opacity="0.85"/>
<line x1="779.7" y1="593.0" x2="770.0" y2="575.0" stroke="#cccc2a" stroke-width="1.3" stroke-opacity="0.85"/>
<line x1="780.3" y1="593.4" x2="760.0" y2="555.0" stroke="#cccc2a" stroke-width="1.3" stroke-opacity="0.85"/>
<line x1="789.8" y1="373.7" x2="797.8" y2="367.0" stroke="#cccc2a" stroke-width="1.3" stroke-opacity="0.85"/>
<line x1="797.8" y1="327.8" x2="803.0" y2="323.0" stroke="#cccc2a" stroke-width="1.3" stroke-opacity="0.85"/>
<line x1="784.0" y1="447.0" x2="834.0" y2="468.0" stroke="#cccc2a" stroke-width="1.3" stroke-opacity="0.85"/>
<line x1="575.6" y1="230.5" x2="597.0" y2="262.0" stroke="#1ed21e" stroke-width="1.6" stroke-opacity="1"/>
<line x1="639.0" y1="253.4" x2="662.0" y2="330.0" stroke="#1ed21e" stroke-width="1.6" stroke-opacity="1"/>
<line x1="596.8" y1="531.7" x2="665.7" y2="449.9" stroke="#1ed21e" stroke-width="1.6" stroke-opacity="1"/>
<line x1="784.0" y1="428.0" x2="872.0" y2="443.0" stroke="#1ed21e" stroke-width="1.6" stroke-opacity="1"/>
<line x1="784.0" y1="435.0" x2="848.0" y2="451.0" stroke="#1ed21e" stroke-width="1.6" stroke-opacity="1"/>
<line x1="818.8" y1="600.0" x2="800.0" y2="573.0" stroke="#1ed21e" stroke-width="1.6" stroke-opacity="1"/>
<line x1="833.9" y1="587.6" x2="820.0" y2="570.0" stroke="#1ed21e" stroke-width="1.6" stroke-opacity="1"/>
<circle cx="696" cy="411" r="7" fill="#6c7f7c" fill-opacity="0.75"/>
<path d="M672 392L690 400L700 425L680 418Z" fill="#5a5d8a" fill-opacity="0.35"/>
</svg><!--/GL-->
</div>
<div class="a" style="left:315px;top:695px;width:762px;height:1px;background:#fff"></div>
<div class="a" style="left:316px;top:696px;width:761px;height:1px;background:#8c8c8c"></div>
<!-- splitter -->
<svg class="a" style="left:642px;top:698px" width="110" height="6"><path d="M1 1L4 4L7 1" fill="none" stroke="#000" stroke-width="1.3"/><path d="M101 1L104 4L107 1" fill="none" stroke="#000" stroke-width="1.3"/><path d="M10 3.5H99" stroke="#666" stroke-width="1" stroke-dasharray="1 2"/></svg>
<!-- command tab -->
<div class="a" style="left:314px;top:725px;width:764px;height:76px;border-top:1px solid #fff;border-left:1px solid #fff;border-right:1px solid #8c8c8c;border-bottom:1px solid #8c8c8c"></div>
<div class="a" style="left:315px;top:705px;width:70px;height:21px;background:#e6e6e6;border-top:1px solid #fff;border-left:1px solid #fff;border-right:1px solid #8c8c8c;border-radius:3px 0 0 0"></div>
<div class="t" style="left:320px;top:707px;letter-spacing:0.1px">Command</div>
<div class="t" style="left:324px;top:734px;letter-spacing:0.2px">Command (local):</div>
<div class="a sk" style="left:432px;top:731px;width:636px;height:21px;background:#fff"></div>
<div class="a rz" style="left:1051px;top:732px;width:16px;height:19px;border-color:#8c8c8c;background:#e6e6e6"></div>
<svg class="a" style="left:1055px;top:739px" width="8" height="5"><path d="M0 0H8L4 5Z" fill="#000"/></svg>
<div class="a" style="left:319px;top:759px;width:754px;height:37px;background:#fff;border-top:1px solid #8c8c8c;border-left:1px solid #8c8c8c;border-right:1px solid #fff;border-bottom:1px solid #fff;box-shadow:inset 1px 1px 0 #e0e0e0"></div>
<!-- status bar segments -->
<div class="a" style="left:392px;top:804px;width:2px;height:17px;border-left:1px solid #8c8c8c;border-right:1px solid #fff"></div>
<div class="a" style="left:494px;top:804px;width:2px;height:17px;border-left:1px solid #8c8c8c;border-right:1px solid #fff"></div>
<div class="a" style="left:596px;top:804px;width:2px;height:17px;border-left:1px solid #8c8c8c;border-right:1px solid #fff"></div>
<svg class="a" style="left:1066px;top:808px" width="13" height="13"><path d="M12 2L2 12M12 6L6 12M12 10L10 12" stroke="#8c8c8c" stroke-width="1"/><path d="M12.5 3L3 12.5M12.5 7L7 12.5" stroke="#fff" stroke-width="1"/></svg>

<!-- status bar -->
<div class="a" style="left:56px;top:802px;width:1024px;height:1px;background:#8c8c8c"></div>
<div class="a" style="left:56px;top:803px;width:1024px;height:1px;background:#fff"></div>

</body></html>
